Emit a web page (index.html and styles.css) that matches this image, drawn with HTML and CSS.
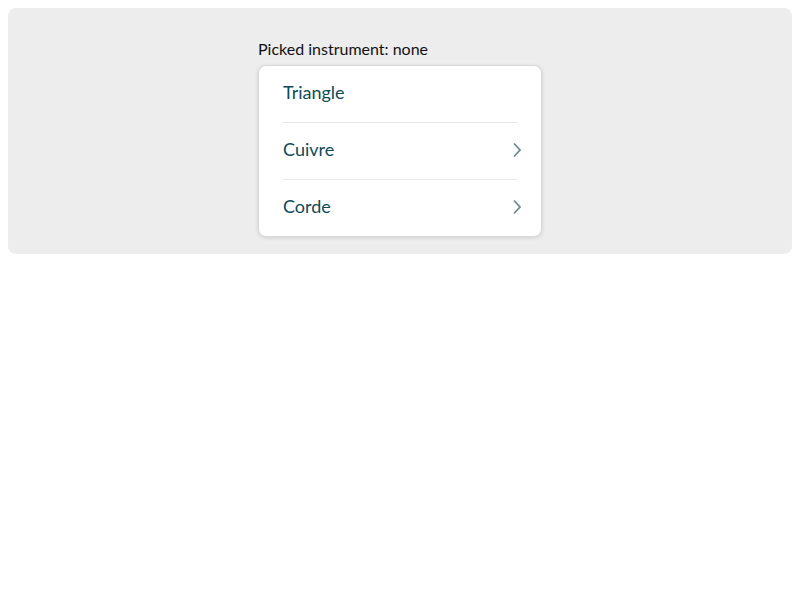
FILE: index.html
```html
<!DOCTYPE html>
<html>
<head>
<meta charset="utf-8">
<link rel="stylesheet" href="styles.css">
</head>
<body>
<div class="stage">
  <div class="picker">
    <div class="label">Picked instrument: none</div>
    <ul class="menu">
      <li class="item"><span class="name">Triangle</span></li>
      <li class="item"><span class="name">Cuivre</span>
        <svg class="chev" width="10" height="16" viewBox="0 0 10 16"><path d="M2 1.5 L8 8 L2 14.5" fill="none" stroke="#6b8b92" stroke-width="1.8"/></svg>
      </li>
      <li class="item"><span class="name">Corde</span>
        <svg class="chev" width="10" height="16" viewBox="0 0 10 16"><path d="M2 1.5 L8 8 L2 14.5" fill="none" stroke="#6b8b92" stroke-width="1.8"/></svg>
      </li>
    </ul>
  </div>
</div>
</body>
</html>
```
FILE: styles.css
```css
body {
  margin: 8px;
  font-family: Lato, "Open Sans", sans-serif;
  background: #fff;
}
.stage {
  background: #ededed;
  border-radius: 8px;
  height: 246px;
  box-sizing: border-box;
  padding-top: 31px;
  display: flex;
  justify-content: center;
}
.picker {
  width: 284px;
}
.label {
  font-size: 16px;
  line-height: 19px;
  color: #111;
  margin-bottom: 7px;
}
.menu {
  list-style: none;
  margin: 0;
  padding: 0 24px;
  background: #fff;
  border: 1px solid #d6dadb;
  border-radius: 8px;
  box-shadow: 0 1px 4px rgba(0, 0, 0, 0.12);
}
.item {
  height: 56px;
  display: flex;
  align-items: center;
  justify-content: space-between;
  font-size: 18px;
  color: #0d4b57;
  border-bottom: 1px solid #e8e8e8;
}
.item:last-child {
  border-bottom: none;
}
.name {
  margin-bottom: 5px;
}
.chev {
  margin-right: -5px;
  margin-bottom: 2px;
}
```
